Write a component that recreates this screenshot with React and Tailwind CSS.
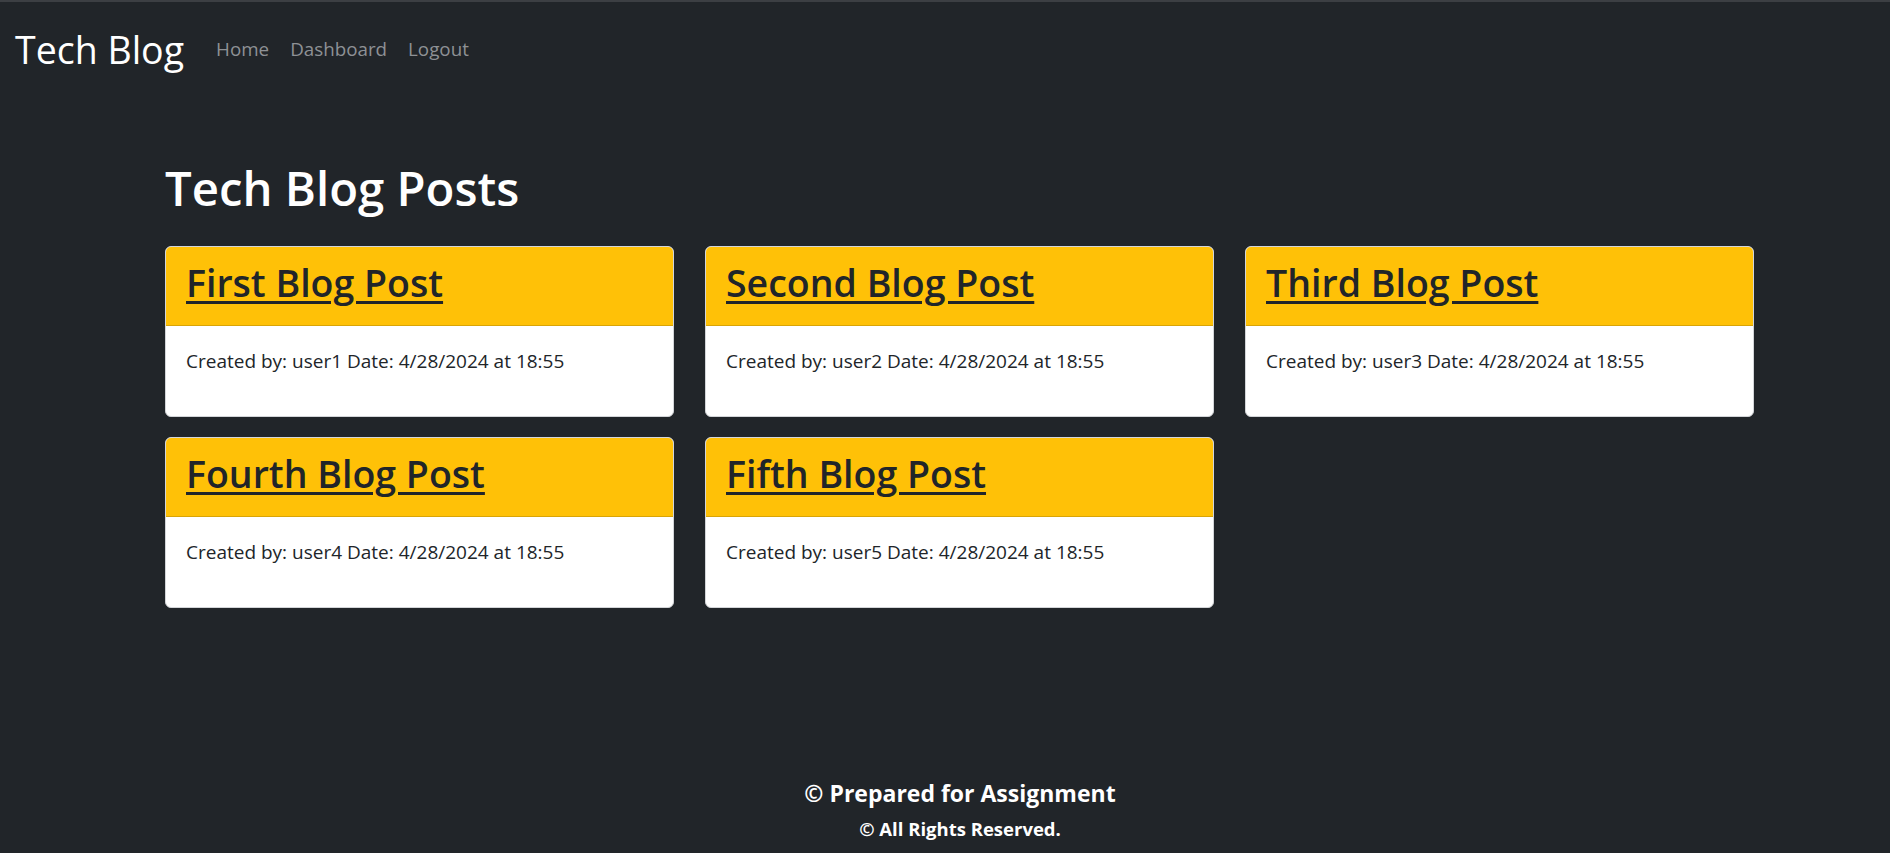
const posts = [
  { id: 1, title: "First Blog Post", user: "user1" },
  { id: 2, title: "Second Blog Post", user: "user2" },
  { id: 3, title: "Third Blog Post", user: "user3" },
  { id: 4, title: "Fourth Blog Post", user: "user4" },
  { id: 5, title: "Fifth Blog Post", user: "user5" },
];

function PostCard({ post }) {
  return (
    <div className="bg-white border border-[#d3d5d8] rounded-[6px] overflow-hidden h-[171px] flex flex-col">
      {/* Cabecera amarilla */}
      <div className="bg-[#ffc107] border-b border-[#d9a406] h-[79px] px-[20px] pt-[13px]">
        <a
          href="#"
          className="text-[37.5px] leading-[1.2] font-semibold text-[#212529] underline decoration-[3px] underline-offset-[4px]"
        >
          {post.title}
        </a>
      </div>

      {/* Cuerpo */}
      <div className="px-[20px] pt-[21px]">
        <p className="text-[19px] leading-[1.5] text-[#212529]">
          Created by: {post.user} Date: 4/28/2024 at 18:55
        </p>
      </div>
    </div>
  );
}

export default function App() {
  return (
    <div
      className="h-[853px] bg-[#212529] border-t-2 border-[#3c3f43] flex flex-col text-white"
      style={{ fontFamily: '"Open Sans", "Noto Sans", sans-serif' }}
    >
      {/* Navbar */}
      <nav className="flex items-center px-[15px] pt-[24.5px]">
        <span className="text-[37.5px] leading-[1.2] text-white mr-[32px]">Tech Blog</span>
        <div className="flex items-center gap-[21px] text-[18.8px] leading-[1.5] text-[#8e9195]">
          <a href="#">Home</a>
          <a href="#">Dashboard</a>
          <a href="#">Logout</a>
        </div>
      </nav>

      {/* Contenido */}
      <main className="pl-[165px] pt-[88px]">
        <h1 className="text-[47.3px] leading-[1.2] font-semibold mb-[30px]">Tech Blog Posts</h1>
        <div className="grid grid-cols-3 w-[1589px] gap-x-[31px] gap-y-[20px]">
          {posts.map((post) => (
            <PostCard key={post.id} post={post} />
          ))}
        </div>
      </main>

      {/* Footer */}
      <footer className="mt-auto pl-[30px] pb-[7px] text-center font-bold">
        <p className="text-[23px] leading-[34px]">© Prepared for Assignment</p>
        <p className="text-[18.5px] leading-[34px] mt-[2px]">© All Rights Reserved.</p>
      </footer>
    </div>
  );
}
